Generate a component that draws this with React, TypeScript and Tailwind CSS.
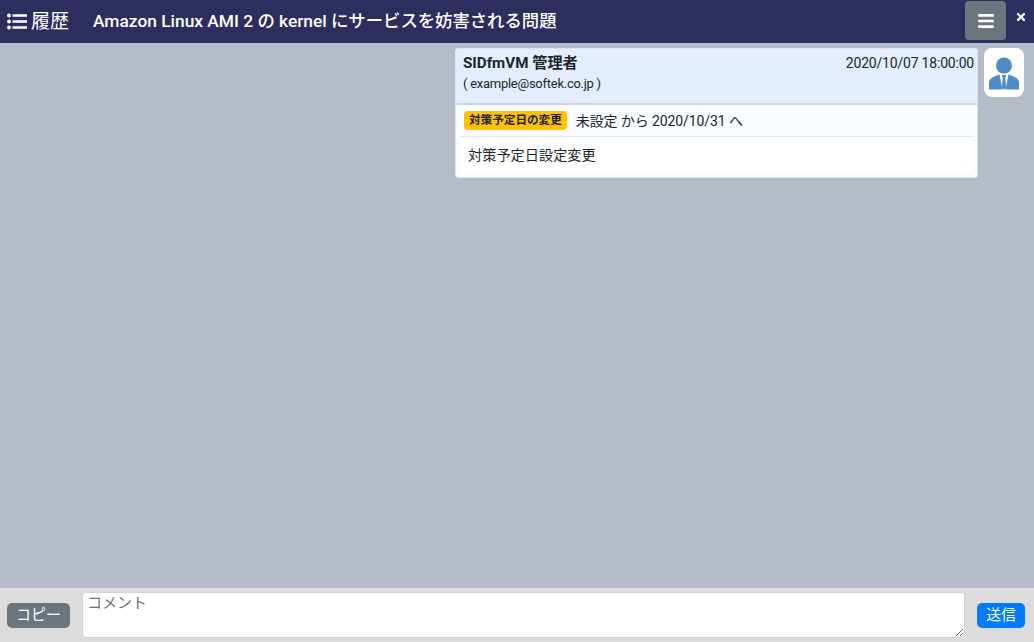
import { FaBars, FaTimes } from "react-icons/fa";

function ListIcon() {
  return (
    <svg viewBox="0 0 20 17" className="w-[20px] h-[17px]" fill="#fff">
      <circle cx="2" cy="2.5" r="1.9" />
      <circle cx="2" cy="8.5" r="1.9" />
      <circle cx="2" cy="14.5" r="1.9" />
      <rect x="5.5" y="1.2" width="14.5" height="2.6" rx="0.4" />
      <rect x="5.5" y="7.2" width="14.5" height="2.6" rx="0.4" />
      <rect x="5.5" y="13.2" width="14.5" height="2.6" rx="0.4" />
    </svg>
  );
}

function UserIcon() {
  return (
    <svg viewBox="0 0 30 34" className="w-[30px] h-[34px]">
      <circle cx="15" cy="9.5" r="8" fill="#4f8bc9" />
      <path d="M0 33.5 V27 C0 22 5 20.5 10.5 18.5 L13.5 33.5 Z" fill="#4f8bc9" />
      <path d="M30 33.5 V27 C30 22 25 20.5 19.5 18.5 L16.5 33.5 Z" fill="#4f8bc9" />
      <path d="M12.8 19 H17.2 L16.2 22 L17.2 32 L15 33.5 L12.8 32 L13.8 22 Z" fill="#4f8bc9" />
    </svg>
  );
}

export default function App() {
  return (
    <div className="flex flex-col h-[642px] w-[1034px] overflow-hidden bg-[#b6bbc9] text-[#212529] font-['Roboto','Noto_Sans_CJK_JP',sans-serif]">
      {/* Header */}
      <header className="flex h-[43px] shrink-0 items-center bg-[#2d2e5e] text-white">
        <div className="flex items-center pl-[7px] w-[93px]">
          <ListIcon />
          <span className="ml-[4px] text-[19px] leading-[27px]">履歴</span>
        </div>
        <h1 className="flex-1 mt-[-2px] text-[17.35px] font-medium leading-6">
          Amazon Linux AMI 2 の kernel にサービスを妨害される問題
        </h1>
        <button className="flex mt-[-2px] h-[39px] w-[41px] items-center justify-center rounded-[4px] bg-[#6c757d]">
          <FaBars className="w-[16px] h-[18px]" />
        </button>
        <button className="flex mb-[10px] w-[28px] justify-center">
          <FaTimes className="w-[12px] h-[12px] ml-[2px]" />
        </button>
      </header>

      {/* History */}
      <main className="flex flex-1 items-start justify-end pt-[5px] pr-[10px] gap-[6px]">
        <div className="w-[523px] overflow-hidden rounded-[3px] border border-[#dfe3ea] bg-[#f8fbff]">
          <div className="flex h-[56px] justify-between border-b-2 border-[#ced4e0] bg-[#e3edfd] pl-[7px] pr-[3px]">
            <div>
              <div className="mt-[4px] text-[15.2px] font-bold leading-[21px]">SIDfmVM 管理者</div>
              <div className="mt-[1px] text-[13px] leading-[18px] tracking-[-0.26px]">( example@softek.co.jp )</div>
            </div>
            <div className="mt-[4px] text-[14px] leading-[21px] tracking-[-0.2px]">2020/10/07 18:00:00</div>
          </div>
          <div className="px-[5px] pb-[5px]">
            <div className="flex h-[32px] items-center border-b border-dotted border-[#ced4da] pl-[3px]">
              <span className="rounded-[4px] bg-[#ffc107] px-[5px] text-[11.6px] font-bold leading-[19px]">対策予定日の変更</span>
              <span className="ml-[9px] mt-[1px] text-[14px] leading-[21px] tracking-[-0.1px]">未設定 から 2020/10/31 へ</span>
            </div>
            <div className="mt-[3px] bg-white pl-[7px] h-[32px] text-[14.2px] leading-[31px]">対策予定日設定変更</div>
          </div>
        </div>
        <div className="flex h-[49px] w-[40px] items-center justify-center rounded-[8px] bg-white">
          <UserIcon />
        </div>
      </main>

      {/* Comment form */}
      <footer className="flex h-[54px] shrink-0 items-center bg-[#dcdcdc]">
        <button className="ml-[7px] h-[25px] w-[63px] rounded-[5px] bg-[#6c757d] text-[15px] leading-[25px] text-white">コピー</button>
        <textarea
          placeholder="コメント"
          className="ml-[12px] mt-[-1px] h-[46px] w-[883px] rounded-[4px] border border-[#ced4da] bg-white px-[4px] text-[15px] leading-[21px] placeholder:text-[#6c757d]"
        />
        <button className="ml-[12px] h-[25px] w-[48px] rounded-[5px] bg-[#007bff] text-[15px] leading-[25px] text-white">送信</button>
      </footer>
    </div>
  );
}
